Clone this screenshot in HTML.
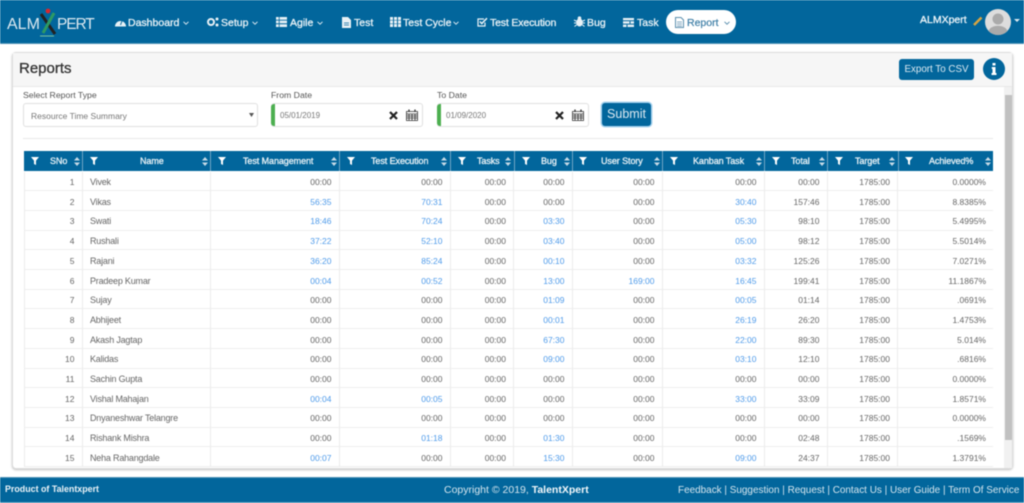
<!DOCTYPE html>
<html><head><meta charset="utf-8"><title>Reports</title>
<style>
*{box-sizing:border-box}
html,body{margin:0;padding:0;width:1024px;height:503px;overflow:hidden;background:#fff;font-family:"Liberation Sans",sans-serif}
#w{position:absolute;left:0;top:0;width:1024px;height:503px;overflow:hidden;filter:blur(.4px)}
.abs,.t{position:absolute;white-space:nowrap}
.nav{position:absolute;left:0;top:0;width:1024px;height:44px;background:#02669c;border-bottom:1px solid #4f93b8}
.t.n{top:17px;font-size:10.5px;line-height:13px;color:#e8f1f6;-webkit-text-stroke:.3px #e8f1f6}
svg{position:absolute;display:block;overflow:visible}
.panel{position:absolute;left:12px;top:52px;width:1001px;height:417px;border:1px solid #ddd;border-radius:4px;box-shadow:0 1px 2px rgba(0,0,0,.25);background:#fff}
.ph{position:absolute;left:0;top:0;width:999px;height:34px;background:#f6f6f6;border-bottom:1px solid #e8e8e8}
.lab{font-size:8.7px;color:#555;line-height:12px}
.inp{position:absolute;top:103px;height:24px;background:#fff;border:1px solid #e0e0e0;border-radius:3px;font-size:8px;color:#777;line-height:23px}
.g{position:absolute;top:0;bottom:0;left:-1px;width:4px;background:#4caf50;border-radius:3px 0 0 3px}
.btn{position:absolute;background:#02669c;color:#dbe9f1;text-align:center;border-radius:3px}
.hd{position:absolute;left:24px;top:151px;width:969px;height:20px;background:#02669c}
.hd i{position:absolute;top:0;width:1px;height:20px;background:#6fa6c5}
.hd b{position:absolute;top:4px;font-size:9px;letter-spacing:-.08px;font-weight:normal;-webkit-text-stroke:.3px #e6f0f5;line-height:12px;color:#e6f0f5;white-space:nowrap}
#rows{position:absolute;left:24px;top:171.5px;width:969px;height:297px;overflow:hidden}
.r{display:grid;grid-template-columns:58.5px 128px 129px 111px 63.5px 58.5px 90px 102px 63px 70.5px 95px;height:19.71px;border-bottom:1px solid #eee}
.r span,.r a{display:block;border-right:1px solid #ececec;padding-right:7px;padding-top:1.5px;text-align:right;font-size:8.5px;line-height:18px;color:#666;white-space:nowrap}
.r a{color:#4f9bea}
.r span:nth-child(2){text-align:left;padding-left:7.5px;font-size:9px;letter-spacing:-.2px;padding-top:1.5px;line-height:18px}
.r span:first-child{border-left:1px solid #ececec}
.r :last-child{border-right:0}
.f{position:absolute;left:0;top:477px;width:1024px;height:26px;background:#02669c;border-top:1px solid #4f93b8;border-bottom:1px solid #4f93b8}
</style></head><body><div id="w">
<svg width="0" height="0" style="position:absolute"><defs>
<symbol id="fn" viewBox="0 0 8 8"><path d="M0 0H8L5 3.6V8L3 7V3.6Z" fill="#fff"/></symbol>
<symbol id="so" viewBox="0 0 6 9"><path d="M3 0L6 3.5H0ZM3 9L0 5.5H6Z" fill="#c7dbe7"/></symbol>
<symbol id="ch" viewBox="0 0 6 4"><path d="M.5 .8L3 3.2L5.5 .8" fill="none" stroke="#dce9f1" stroke-width="1"/></symbol>
</defs></svg>

<div class="nav"></div>
<div class="t" style="left:7px;top:16px;font-size:16px;line-height:18px;color:#dbe8f0">ALM</div>
<div class="t" style="left:57px;top:16px;font-size:15.5px;letter-spacing:-1.1px;line-height:18px;color:#dbe8f0">PERT</div>
<svg style="left:38px;top:7px" width="22" height="30" viewBox="0 0 22 30"><path d="M3 7L17 27" stroke="#222" stroke-width="3"/><path d="M16 6L5 26" stroke="#2e9a63" stroke-width="3"/><circle cx="10" cy="4" r="2.4" fill="#d8282f"/><path d="M2 29H16" stroke="#7cc29b" stroke-width="1"/></svg>

<svg style="left:115px;top:17px" width="11" height="10" viewBox="0 0 11 10"><path d="M0 9.5A5.5 5.5 0 1 1 11 9.5Z" fill="#e8f1f6"/><path d="M5.5 8L7 4" stroke="#02669c"/></svg>
<div class="t n" style="left:128px">Dashboard</div><svg style="left:183px;top:21px" width="6" height="4"><use href="#ch"/></svg>
<svg style="left:207px;top:17px" width="12" height="10" viewBox="0 0 12 10"><circle cx="4" cy="5" r="3" fill="none" stroke="#e8f1f6" stroke-width="2"/><circle cx="10" cy="2" r="1.5" fill="#e8f1f6"/><circle cx="10" cy="8" r="1.5" fill="#e8f1f6"/></svg>
<div class="t n" style="left:221px">Setup</div><svg style="left:252px;top:21px" width="6" height="4"><use href="#ch"/></svg>
<svg style="left:276px;top:17px" width="11" height="10" viewBox="0 0 11 10"><path d="M0 0H11V2.7H0ZM0 3.6H11V6.3H0ZM0 7.3H11V10H0Z" fill="#e8f1f6"/><path d="M3.2 0V10" stroke="#02669c" stroke-width=".8"/></svg>
<div class="t n" style="left:290px">Agile</div><svg style="left:317px;top:21px" width="6" height="4"><use href="#ch"/></svg>
<svg style="left:342px;top:17px" width="9" height="11" viewBox="0 0 9 11"><path d="M0 0H6L9 3V11H0Z" fill="#e8f1f6"/><path d="M2 6H7M2 8H7" stroke="#02669c" stroke-width=".8"/></svg>
<div class="t n" style="left:354px">Test</div>
<svg style="left:390px;top:17px" width="11" height="10" viewBox="0 0 11 10"><path d="M0 0H3V3H0ZM4 0H7V3H4ZM8 0H11V3H8ZM0 3.5H3V6.5H0ZM4 3.5H7V6.5H4ZM8 3.5H11V6.5H8ZM0 7H3V10H0ZM4 7H7V10H4ZM8 7H11V10H8Z" fill="#e8f1f6"/></svg>
<div class="t n" style="left:403px">Test Cycle</div><svg style="left:453px;top:21px" width="6" height="4"><use href="#ch"/></svg>
<svg style="left:477px;top:17px" width="11" height="10" viewBox="0 0 11 10"><path d="M8 5.5V9H1V2H7" fill="none" stroke="#e8f1f6" stroke-width="1.2"/><path d="M2.8 4.5L4.8 6.5L10 1.2" fill="none" stroke="#e8f1f6" stroke-width="1.5"/></svg>
<div class="t n" style="left:490px;letter-spacing:-.15px">Test Execution</div>
<svg style="left:574px;top:16px" width="11" height="11" viewBox="0 0 11 11"><ellipse cx="5.5" cy="6.5" rx="3.2" ry="4" fill="#e8f1f6"/><circle cx="5.5" cy="2.2" r="1.8" fill="#e8f1f6"/><path d="M0 4L3 5.5M11 4L8 5.5M0 7H3M11 7H8M.5 10.5L3 8.5M10.5 10.5L8 8.5" stroke="#e8f1f6"/></svg>
<div class="t n" style="left:587px">Bug</div>
<svg style="left:623px;top:18px" width="11" height="9" viewBox="0 0 11 9"><path d="M0 0H11V2.3H0ZM0 3.3H11V5.6H0ZM0 6.6H11V9H0Z" fill="#e8f1f6"/><path d="M7 3.3V5.6M4 6.6V9" stroke="#02669c"/></svg>
<div class="t n" style="left:637px">Task</div>

<div class="abs" style="left:666px;top:10px;width:70px;height:24px;background:#fff;border-radius:12px"></div>
<svg style="left:675px;top:17px" width="9" height="11" viewBox="0 0 9 11"><path d="M.5 .5H6L8.5 3V10.5H.5Z" fill="#fff" stroke="#5c8fae"/><path d="M2 5H7M2 7H7M2 9H7" stroke="#5c8fae" stroke-width=".7"/></svg>
<div class="t n" style="left:687px;color:#3d7ea6;-webkit-text-stroke:.2px #3d7ea6">Report</div><svg style="left:724px;top:21px" width="6" height="4"><path d="M.5 .8L3 3.2L5.5 .8" fill="none" stroke="#5c8fae"/></svg>

<div class="t n" style="left:920px;top:14px;color:#eef5f9">ALMXpert</div>
<svg style="left:973px;top:16px" width="10" height="10" viewBox="0 0 10 10"><path d="M1 9L8.5 1.5" stroke="#d6a441" stroke-width="2.6"/></svg>
<svg style="left:985px;top:9px" width="26" height="26" viewBox="0 0 26 26"><circle cx="13" cy="13" r="13" fill="#ddd"/><circle cx="13" cy="10" r="5.5" fill="#aaa"/><path d="M3.5 22C6 15 20 15 22.500 22A13 13 0 0 1 3.500 22Z" fill="#aaa"/></svg>
<svg style="left:1014px;top:19px" width="6" height="4"><path d="M0 0H6L3 3Z" fill="#dce9f1"/></svg>

<div class="panel"><div class="ph"></div></div>
<div class="t" style="left:19px;top:60px;font-size:15px;-webkit-text-stroke:.3px #333;line-height:18px;color:#333">Reports</div>
<div class="btn" style="left:899px;top:59px;width:75px;height:21px;font-size:9.8px;line-height:21px">Export To CSV</div>
<div class="abs" style="left:983px;top:58px;width:22px;height:22px;border-radius:50%;background:#02669c"></div>
<svg style="left:991px;top:63px" width="6" height="12" viewBox="0 0 6 12"><path d="M1.500 0H4.500V2.500H1.500ZM.8 4H4.500V10H5.500V12H.5V10H1.500V6H.8Z" fill="#fff"/></svg>

<div class="abs" style="left:1004px;top:87px;width:8px;height:381px;background:#f1f1f1"></div>
<div class="abs" style="left:1005px;top:95px;width:7px;height:345px;background:#c1c1c1"></div>

<div class="t lab" style="left:23px;top:89px">Select Report Type</div>
<div class="t lab" style="left:271px;top:89px">From Date</div>
<div class="t lab" style="left:437px;top:89px">To Date</div>
<div class="inp" style="left:23px;width:235px;padding-left:7px;height:24px;top:103px;font-size:8.5px;line-height:24px">Resource Time Summary</div>
<svg style="left:249px;top:113px" width="5" height="4"><path d="M0 0H5L2.500 4Z" fill="#555"/></svg>
<div class="inp" style="left:271px;width:152px;padding-left:8px;top:103px"><div class="g"></div>05/01/2019</div>
<div class="inp" style="left:437px;width:152px;padding-left:8px;top:103px"><div class="g"></div>01/09/2020</div>
<svg style="left:389px;top:111px" width="9" height="9" viewBox="0 0 9 9"><path d="M1 1L8 8M8 1L1 8" stroke="#222" stroke-width="2.200"/></svg>
<svg style="left:555px;top:111px" width="9" height="9" viewBox="0 0 9 9"><path d="M1 1L8 8M8 1L1 8" stroke="#222" stroke-width="2.200"/></svg>
<svg style="left:406px;top:109px" width="12" height="12" viewBox="0 0 12 12"><path d="M.5 2.500H11.500V11.500H.5ZM.5 5H11.500M.5 7H11.500M.5 9H11.500M3 5V11.500M6 5V11.500M9 5V11.500" fill="none" stroke="#333" stroke-width=".8"/><path d="M3 .5V3M9 .5V3" stroke="#333" stroke-width="1.300"/></svg>
<svg style="left:572px;top:109px" width="12" height="12" viewBox="0 0 12 12"><path d="M.5 2.500H11.500V11.500H.5ZM.5 5H11.500M.5 7H11.500M.5 9H11.500M3 5V11.500M6 5V11.500M9 5V11.500" fill="none" stroke="#333" stroke-width=".8"/><path d="M3 .5V3M9 .5V3" stroke="#333" stroke-width="1.300"/></svg>
<div class="btn" style="left:602px;top:103px;width:49px;height:23px;font-size:12.500px;line-height:23px;box-shadow:0 0 0 1.500px #a9d3ee">Submit</div>
<div class="abs" style="left:23px;top:138px;width:970px;height:1px;background:#e8e8e8"></div>

<div class="hd">
<i style="left:58px"></i><i style="left:186px"></i><i style="left:315px"></i><i style="left:426px"></i><i style="left:490px"></i><i style="left:548px"></i><i style="left:638px"></i><i style="left:740px"></i><i style="left:803px"></i><i style="left:874px"></i>
<b style="left:26px">SNo</b><b style="left:116px">Name</b><b style="left:219px">Test Management</b><b style="left:347px">Test Execution</b><b style="left:453px">Tasks</b><b style="left:517px">Bug</b><b style="left:577px">User Story</b><b style="left:669px">Kanban Task</b><b style="left:767px">Total</b><b style="left:831px">Target</b><b style="left:905px">Achieved%</b>
</div>
<svg style="left:31px;top:157px" width="8" height="8"><use href="#fn"/></svg><svg style="left:90px;top:157px" width="8" height="8"><use href="#fn"/></svg><svg style="left:218px;top:157px" width="8" height="8"><use href="#fn"/></svg><svg style="left:347px;top:157px" width="8" height="8"><use href="#fn"/></svg><svg style="left:458px;top:157px" width="8" height="8"><use href="#fn"/></svg><svg style="left:522px;top:157px" width="8" height="8"><use href="#fn"/></svg><svg style="left:579px;top:157px" width="8" height="8"><use href="#fn"/></svg><svg style="left:670px;top:157px" width="8" height="8"><use href="#fn"/></svg><svg style="left:772px;top:157px" width="8" height="8"><use href="#fn"/></svg><svg style="left:835px;top:157px" width="8" height="8"><use href="#fn"/></svg><svg style="left:905px;top:157px" width="8" height="8"><use href="#fn"/></svg>
<svg style="left:74px;top:157px" width="6" height="9"><use href="#so"/></svg><svg style="left:202px;top:157px" width="6" height="9"><use href="#so"/></svg><svg style="left:331px;top:157px" width="6" height="9"><use href="#so"/></svg><svg style="left:441px;top:157px" width="6" height="9"><use href="#so"/></svg><svg style="left:505px;top:157px" width="6" height="9"><use href="#so"/></svg><svg style="left:564px;top:157px" width="6" height="9"><use href="#so"/></svg><svg style="left:654px;top:157px" width="6" height="9"><use href="#so"/></svg><svg style="left:756px;top:157px" width="6" height="9"><use href="#so"/></svg><svg style="left:819px;top:157px" width="6" height="9"><use href="#so"/></svg><svg style="left:889px;top:157px" width="6" height="9"><use href="#so"/></svg><svg style="left:985px;top:157px" width="6" height="9"><use href="#so"/></svg>

<div id="rows">
<div class="r"><span>1</span><span>Vivek</span><span>00:00</span><span>00:00</span><span>00:00</span><span>00:00</span><span>00:00</span><span>00:00</span><span>00:00</span><span>1785:00</span><span>0.0000%</span></div>
<div class="r"><span>2</span><span>Vikas</span><a>56:35</a><a>70:31</a><span>00:00</span><span>00:00</span><span>00:00</span><a>30:40</a><span>157:46</span><span>1785:00</span><span>8.8385%</span></div>
<div class="r"><span>3</span><span>Swati</span><a>18:46</a><a>70:24</a><span>00:00</span><a>03:30</a><span>00:00</span><a>05:30</a><span>98:10</span><span>1785:00</span><span>5.4995%</span></div>
<div class="r"><span>4</span><span>Rushali</span><a>37:22</a><a>52:10</a><span>00:00</span><a>03:40</a><span>00:00</span><a>05:00</a><span>98:12</span><span>1785:00</span><span>5.5014%</span></div>
<div class="r"><span>5</span><span>Rajani</span><a>36:20</a><a>85:24</a><span>00:00</span><a>00:10</a><span>00:00</span><a>03:32</a><span>125:26</span><span>1785:00</span><span>7.0271%</span></div>
<div class="r"><span>6</span><span>Pradeep Kumar</span><a>00:04</a><a>00:52</a><span>00:00</span><a>13:00</a><a>169:00</a><a>16:45</a><span>199:41</span><span>1785:00</span><span>11.1867%</span></div>
<div class="r"><span>7</span><span>Sujay</span><span>00:00</span><span>00:00</span><span>00:00</span><a>01:09</a><span>00:00</span><a>00:05</a><span>01:14</span><span>1785:00</span><span>.0691%</span></div>
<div class="r"><span>8</span><span>Abhijeet</span><span>00:00</span><span>00:00</span><span>00:00</span><a>00:01</a><span>00:00</span><a>26:19</a><span>26:20</span><span>1785:00</span><span>1.4753%</span></div>
<div class="r"><span>9</span><span>Akash Jagtap</span><span>00:00</span><span>00:00</span><span>00:00</span><a>67:30</a><span>00:00</span><a>22:00</a><span>89:30</span><span>1785:00</span><span>5.014%</span></div>
<div class="r"><span>10</span><span>Kalidas</span><span>00:00</span><span>00:00</span><span>00:00</span><a>09:00</a><span>00:00</span><a>03:10</a><span>12:10</span><span>1785:00</span><span>.6816%</span></div>
<div class="r"><span>11</span><span>Sachin Gupta</span><span>00:00</span><span>00:00</span><span>00:00</span><span>00:00</span><span>00:00</span><span>00:00</span><span>00:00</span><span>1785:00</span><span>0.0000%</span></div>
<div class="r"><span>12</span><span>Vishal Mahajan</span><a>00:04</a><a>00:05</a><span>00:00</span><span>00:00</span><span>00:00</span><a>33:00</a><span>33:09</span><span>1785:00</span><span>1.8571%</span></div>
<div class="r"><span>13</span><span>Dnyaneshwar Telangre</span><span>00:00</span><span>00:00</span><span>00:00</span><span>00:00</span><span>00:00</span><span>00:00</span><span>00:00</span><span>1785:00</span><span>0.0000%</span></div>
<div class="r"><span>14</span><span>Rishank Mishra</span><span>00:00</span><a>01:18</a><span>00:00</span><a>01:30</a><span>00:00</span><span>00:00</span><span>02:48</span><span>1785:00</span><span>.1569%</span></div>
<div class="r"><span>15</span><span>Neha Rahangdale</span><a>00:07</a><span>00:00</span><span>00:00</span><a>15:30</a><span>00:00</span><a>09:00</a><span>24:37</span><span>1785:00</span><span>1.3791%</span></div>
</div>

<div class="f"></div>
<div class="t" style="left:5px;top:484px;font-size:8.9px;line-height:11px;font-weight:bold;color:#eaf2f7">Product of Talentxpert</div>
<div class="t" style="left:444px;top:484px;font-size:10.500px;line-height:13px;color:#d5e5ee">Copyright © 2019, <b style="color:#f2f7fa">TalentXpert</b></div>
<div class="t" style="left:678px;top:484px;font-size:9.950px;line-height:13px;color:#d5e5ee">Feedback | Suggestion | Request | Contact Us | User Guide | Term Of Service</div>
</div></body></html>
